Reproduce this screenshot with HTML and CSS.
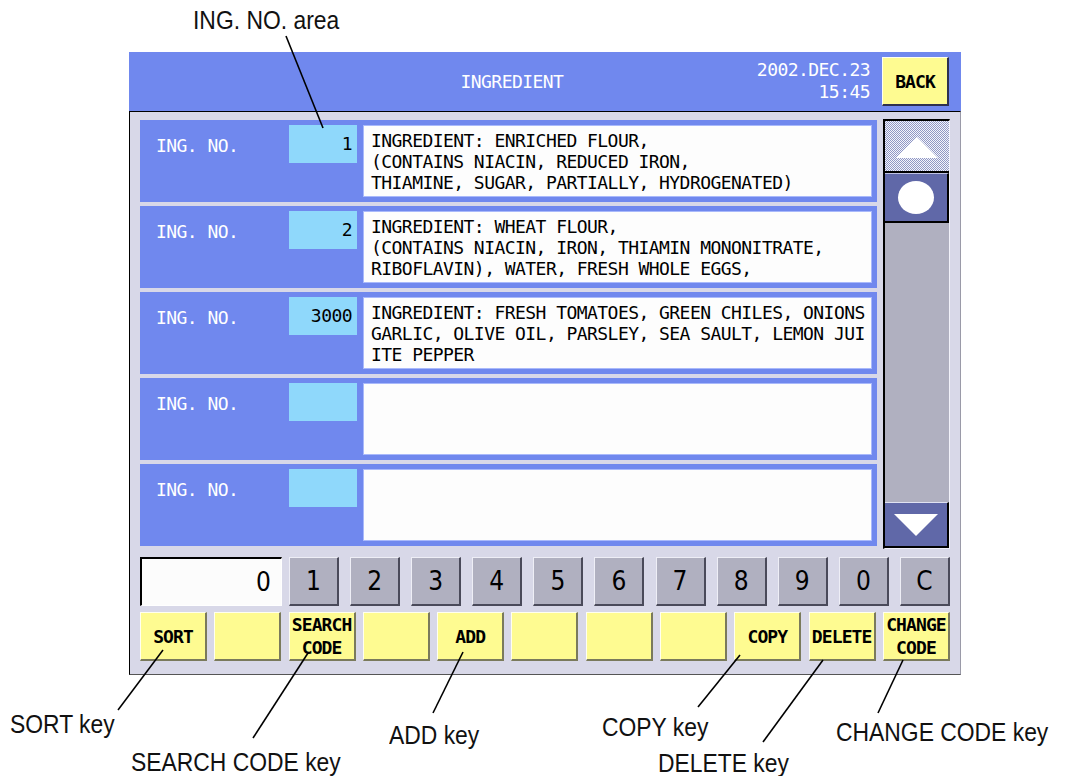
FILE: index.html
```html
<!DOCTYPE html>
<html lang="en">
<head>
    <meta charset="UTF-8">
    <meta name="viewport" content="width=device-width, initial-scale=1.0">
    <title>INGREDIENT</title>
    <link rel="stylesheet" href="styles.css">
</head>
<body>
    <div class="screen">
        <div class="header">
            <div class="title">INGREDIENT</div>
            <div class="clock">2002.DEC.23<br>15:45</div>
            <div class="fkey back">BACK</div>
        </div>

        <div class="panel">
            <div class="top">
                <div class="rows">
                    <div class="row">
                        <div class="label">ING. NO.</div>
                        <div class="num">1</div>
                        <div class="text">INGREDIENT: ENRICHED FLOUR,<br>(CONTAINS NIACIN, REDUCED IRON,<br>THIAMINE, SUGAR, PARTIALLY, HYDROGENATED)</div>
                    </div>
                    <div class="row">
                        <div class="label">ING. NO.</div>
                        <div class="num">2</div>
                        <div class="text">INGREDIENT: WHEAT FLOUR,<br>(CONTAINS NIACIN, IRON, THIAMIN MONONITRATE,<br>RIBOFLAVIN), WATER, FRESH WHOLE EGGS,</div>
                    </div>
                    <div class="row">
                        <div class="label">ING. NO.</div>
                        <div class="num">3000</div>
                        <div class="text">INGREDIENT: FRESH TOMATOES, GREEN CHILES, ONIONS<br>GARLIC, OLIVE OIL, PARSLEY, SEA SAULT, LEMON JUI<br>ITE PEPPER</div>
                    </div>
                    <div class="row">
                        <div class="label">ING. NO.</div>
                        <div class="num"></div>
                        <div class="text"></div>
                    </div>
                    <div class="row">
                        <div class="label">ING. NO.</div>
                        <div class="num"></div>
                        <div class="text"></div>
                    </div>
                </div>

                <div class="scroll">
                    <div class="sc-up">
                        <svg width="42" height="21" viewBox="0 0 42 21"><polygon points="21,0 42,21 0,21" fill="#fff"/></svg>
                    </div>
                    <div class="sc-thumb"><span class="dot"></span></div>
                    <div class="sc-track"></div>
                    <div class="sc-down">
                        <svg width="44" height="22" viewBox="0 0 44 22"><polygon points="0,0 44,0 22,22" fill="#fff"/></svg>
                    </div>
                </div>
            </div>

            <div class="keypad">
                <div class="entry">0</div>
                <div class="digits">
                    <div class="digit">1</div>
                    <div class="digit">2</div>
                    <div class="digit">3</div>
                    <div class="digit">4</div>
                    <div class="digit">5</div>
                    <div class="digit">6</div>
                    <div class="digit">7</div>
                    <div class="digit">8</div>
                    <div class="digit">9</div>
                    <div class="digit">0</div>
                    <div class="digit">C</div>
                </div>
            </div>

            <div class="fkeys">
                <div class="fkey">SORT</div>
                <div class="fkey"></div>
                <div class="fkey">SEARCH<br>CODE</div>
                <div class="fkey"></div>
                <div class="fkey">ADD</div>
                <div class="fkey"></div>
                <div class="fkey"></div>
                <div class="fkey"></div>
                <div class="fkey">COPY</div>
                <div class="fkey">DELETE</div>
                <div class="fkey">CHANGE<br>CODE</div>
            </div>
        </div>
    </div>

    <!-- callouts -->
    <div class="callouts">
        <svg class="leaders" width="1070" height="776" viewBox="0 0 1070 776">
            <line x1="286" y1="36" x2="323" y2="128"/>
            <line x1="163" y1="650" x2="118" y2="710"/>
            <line x1="308" y1="653" x2="253" y2="738"/>
            <line x1="463" y1="652" x2="433" y2="713"/>
            <line x1="740" y1="655" x2="698" y2="707"/>
            <line x1="823" y1="660" x2="763" y2="742"/>
            <line x1="903" y1="660" x2="878" y2="713"/>
        </svg>
        <span class="note n-ing">ING. NO. area</span>
        <span class="note n-sort">SORT key</span>
        <span class="note n-search">SEARCH CODE key</span>
        <span class="note n-add">ADD key</span>
        <span class="note n-copy">COPY key</span>
        <span class="note n-delete">DELETE key</span>
        <span class="note n-change">CHANGE CODE key</span>
    </div>
</body>
</html>
```

FILE: styles.css
```css
* {
    margin: 0;
    padding: 0;
    box-sizing: border-box;
}

body {
    position: relative;
    width: 1070px;
    height: 776px;
    background: #fff;
    font-family: 'DejaVu Sans Mono', monospace;
    overflow: hidden;
}

.screen {
    width: 832px;
    margin: 52px 0 0 129px;
}

/* header bar */
.header {
    display: flex;
    align-items: center;
    height: 59px;
    padding-right: 12px;
    background: #7088ee;
    color: #fff;
    font-size: 18px;
    letter-spacing: -0.55px;
}

.title {
    flex: 1;
    padding-left: 138px;
    text-align: center;
}

.clock {
    margin-right: 12px;
    text-align: right;
    line-height: 22px;
    margin-top: -2px;
}

/* main panel */
.panel {
    background: #d8d8e8;
    border-top: 1px solid #000;
    border-left: 1px solid #000;
    border-right: 1px solid #9a9aa8;
    border-bottom: 1px solid #555;
    padding: 8px 10px 13px 10px;
}

.top {
    display: flex;
    align-items: flex-start;
    gap: 6px;
    height: 426px;
}

.rows {
    width: 737px;
    display: flex;
    flex-direction: column;
    gap: 4px;
}

.row {
    display: flex;
    height: 82px;
    padding: 5px;
    background: #7088ee;
    font-size: 18px;
    letter-spacing: -0.55px;
}

.label {
    width: 144px;
    padding: 10px 0 0 11px;
    color: #fff;
    line-height: 21px;
}

.num {
    width: 68px;
    height: 38px;
    margin-right: 6px;
    padding-right: 5px;
    background: #8fd8fb;
    color: #000;
    text-align: right;
    line-height: 38px;
}

.text {
    flex: 1;
    height: 72px;
    padding: 4px 7px;
    background: #fdfdfd;
    border: 1px solid #a9b9fb;
    color: #000;
    line-height: 21px;
    white-space: nowrap;
    overflow: hidden;
}

/* scroll bar */
.scroll {
    width: 67px;
    height: 430px;
    margin-top: -1px;
    display: flex;
    flex-direction: column;
    border-top: 2px solid #000;
    border-left: 2px solid #000;
    border-right: 1px solid #f2f2fa;
    border-bottom: 1px solid #f2f2fa;
    background: #b0b0c0;
}

.sc-up {
    height: 52px;
    display: flex;
    align-items: center;
    justify-content: center;
    border-bottom: 2px solid #000;
    background-color: #c4c8e0;
    background-image: repeating-conic-gradient(#f4f4fc 0 25%, #9098c4 0 50%);
    background-size: 2px 2px;
}

.sc-up svg {
    margin-top: 2px;
}

.sc-thumb {
    height: 50px;
    display: flex;
    align-items: center;
    justify-content: center;
    background: #6068a8;
    border-top: 1px solid #c0c4e4;
    border-right: 2px solid #000;
    border-bottom: 2px solid #000;
}

.dot {
    width: 36px;
    height: 33px;
    border-radius: 50%;
    background: #fff;
}

.sc-track {
    flex: 1;
}

.sc-down {
    height: 46px;
    display: flex;
    align-items: center;
    justify-content: center;
    background: #6068a8;
    border-top: 1px solid #e0e2f2;
    border-right: 2px solid #000;
    border-bottom: 2px solid #000;
}

/* number keys */
.keypad {
    display: flex;
    margin-top: 11px;
    height: 49px;
}

.entry {
    width: 142px;
    margin-right: 7px;
    padding-right: 10px;
    background: #fcfcfc;
    border-top: 2px solid #000;
    border-left: 2px solid #000;
    border-right: 1px solid #fff;
    border-bottom: 1px solid #fff;
    text-align: right;
    font-family: 'DejaVu Sans Condensed', sans-serif;
    font-size: 26px;
    line-height: 46px;
    color: #000;
}

.digits {
    flex: 1;
    display: flex;
    justify-content: space-between;
}

.digit {
    width: 50px;
    height: 49px;
    background: #b0b0c0;
    border-top: 1px solid #eeeef6;
    border-left: 1px solid #eeeef6;
    border-right: 2px solid #4a4a5a;
    border-bottom: 2px solid #4a4a5a;
    text-align: center;
    font-family: 'DejaVu Sans Condensed', sans-serif;
    font-size: 26px;
    line-height: 46px;
    color: #000;
}

/* function keys */
.fkeys {
    display: flex;
    justify-content: space-between;
    margin-top: 6px;
}

.fkey {
    width: 67px;
    height: 49px;
    display: flex;
    align-items: center;
    justify-content: center;
    background: #fefb91;
    border-top: 1px solid #fffff0;
    border-left: 1px solid #fffff0;
    border-right: 2px solid #7a7a5c;
    border-bottom: 2px solid #7a7a5c;
    text-align: center;
    font-size: 18px;
    font-weight: bold;
    letter-spacing: -0.9px;
    line-height: 23px;
    color: #000;
}

.back {
    border-right-color: #2e3050;
    border-bottom-color: #2e3050;
}

/* annotation labels */
.callouts {
    position: absolute;
    top: 0;
    left: 0;
    width: 1070px;
    height: 776px;
    pointer-events: none;
}

.leaders {
    position: absolute;
    top: 0;
    left: 0;
}

.leaders line {
    stroke: #000;
    stroke-width: 1.6;
}

.note {
    position: absolute;
    font-family: 'Liberation Sans', Arial, sans-serif;
    font-size: 26px;
    line-height: 26px;
    white-space: nowrap;
    color: #111;
    transform: scaleX(0.88);
    transform-origin: left top;
}

.n-ing { left: 193px; top: 7px; }
.n-sort { left: 10px; top: 711px; }
.n-search { left: 131px; top: 749px; }
.n-add { left: 389px; top: 722px; }
.n-copy { left: 602px; top: 714px; }
.n-delete { left: 658px; top: 750px; }
.n-change { left: 836px; top: 719px; }
```
